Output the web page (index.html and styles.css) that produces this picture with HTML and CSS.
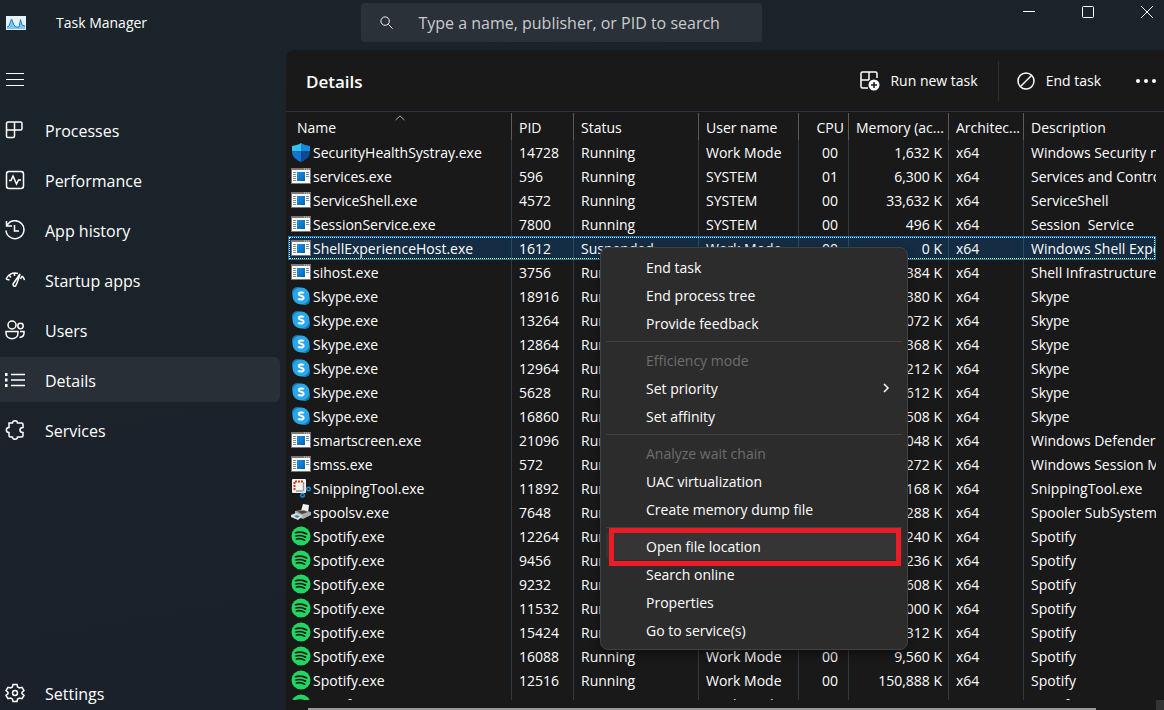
FILE: index.html
```
<!DOCTYPE html>
<html lang="en">
<head>
<meta charset="UTF-8">
<meta name="viewport" content="width=device-width, initial-scale=1.0">
<title>Task Manager</title>
<link rel="stylesheet" href="styles.css">
</head>
<body>
<!-- process icons, reused by the table rows -->
<svg class="sprite" aria-hidden="true">
  <defs>
    <linearGradient id="blue" x1="0" y1="0" x2="1" y2="1">
      <stop offset="0" stop-color="#1a92e6"/>
      <stop offset="1" stop-color="#0563b3"/>
    </linearGradient>
  </defs>
  <symbol id="shield" viewBox="0 0 20 20">
    <path d="M10 1C7 3 4 3.500 1 4V9.500H10Z" fill="#35c1f1"/>
    <path d="M10 1C13 3 16 3.500 19 4V9.500H10Z" fill="#1789dc"/>
    <path d="M1 9.500C1 14.500 5 18 10 20V9.500Z" fill="#1475d0"/>
    <path d="M19 9.500C19 14.500 15 18 10 20V9.500Z" fill="#0c4a94"/>
  </symbol>
  <symbol id="app" viewBox="0 0 20 20">
    <rect x="0" y="2" width="20" height="16" fill="#777"/>
    <rect x="1" y="4" width="18" height="13" fill="#fff"/>
    <path d="M13 3h1M15 3h1M17 3h1" stroke="#ddd"/>
    <path d="M2 6.500h3M2 8.500h3M2 10.500h3M2 12.500h3M2 14.500h3M15 6.500h3M15 8.500h3M15 10.500h3" stroke="#888"/>
    <rect x="6" y="6" width="8" height="9" fill="url(#blue)"/>
  </symbol>
  <symbol id="skype" viewBox="0 0 20 20">
    <circle cx="6.500" cy="6.500" r="5.500" fill="#1382c4"/>
    <circle cx="13.500" cy="13.500" r="5.500" fill="#1382c4"/>
    <circle cx="10" cy="10" r="8.500" fill="#28a8ea"/>
    <path d="M12.700 7.300C12 6.200 7.800 5.900 7.800 8.200C7.800 10.300 12.600 9.300 12.600 11.700C12.600 14.200 8 13.900 7.200 12.500" fill="none" stroke="#fff" stroke-width="2"/>
  </symbol>
  <symbol id="snip" viewBox="0 0 20 20">
    <rect x="1" y="1" width="14" height="14" rx="1" fill="#f3f3f3"/>
    <path d="M3.500 12V3.500H12" fill="none" stroke="#d83b01" stroke-width="2" stroke-dasharray="2 1"/>
    <path d="M12.500 4V13H5" fill="none" stroke="#999" stroke-width="1.500"/>
    <path d="M13 10.500H16M12 13V16" stroke="#ddd" stroke-width="1.500"/>
    <circle cx="17.500" cy="11" r="1.800" fill="none" stroke="#1b8fd8" stroke-width="1.400"/>
    <circle cx="11.500" cy="17.300" r="1.800" fill="none" stroke="#1b8fd8" stroke-width="1.400"/>
  </symbol>
  <symbol id="printer" viewBox="0 0 20 20">
    <path d="M10 9L12 2L18 3L17 11Z" fill="#f5f5f5"/>
    <path d="M4 9L12 8L20 10V13L12 17L4 14Z" fill="#a9a9a9"/>
    <path d="M6 9.500L13 8.500L17 10L11 12Z" fill="#444"/>
    <path d="M0 13L5 11L12 14L7 18L0 15Z" fill="#dcdcdc"/>
    <path d="M3 14L6 13L9 14.500L6 16Z" fill="#3d87c9"/>
  </symbol>
  <symbol id="spotify" viewBox="0 0 20 20">
    <circle cx="10" cy="10" r="9.500" fill="#1ed760"/>
    <path d="M4.500 6.800C8 5.700 12.500 6.100 15.700 8M5 10C8 9.100 11.800 9.500 14.600 11.200M5.400 13C8 12.300 11 12.700 13.600 14.200" fill="none" stroke="#191919" stroke-width="1.600" stroke-linecap="round"/>
  </symbol>
</svg>

<div class="window">
  <header class="titlebar">
    <div class="brand">
      <svg class="brand-icon" viewBox="0 0 20 14">
        <rect width="20" height="14" fill="#e8f1f8"/>
        <path d="M1 11L3 10L5.500 3L8 9L10 11H13L14.500 3.500L16 9L19 10V13H1Z" fill="#7cc7f2"/>
        <path d="M1 11L3 10L5.500 3L8 9L10 11H13L14.500 3.500L16 9L19 10" fill="none" stroke="#1681d2"/>
      </svg>
      <span>Task Manager</span>
    </div>
    <label class="search">
      <svg class="search-icon" viewBox="0 0 16 16"><circle cx="6.500" cy="6.500" r="4.500"/><path d="M10 10L14.500 14.500"/></svg>
      <input type="text" aria-label="Search" placeholder="Type a name, publisher, or PID to search">
    </label>
    <div class="window-buttons">
      <button type="button" aria-label="Minimize"><svg viewBox="0 0 14 14"><path d="M1 6.500H13"/></svg></button>
      <button type="button" aria-label="Maximize"><svg viewBox="0 0 14 14"><rect x="1.500" y="1.500" width="11" height="11" rx="1"/></svg></button>
      <button type="button" aria-label="Close"><svg viewBox="0 0 14 14"><path d="M1 1L13 13M13 1L1 13"/></svg></button>
    </div>
  </header>

  <nav class="sidebar">
    <button type="button" class="menu-toggle" aria-label="Open navigation">
      <svg class="icon" viewBox="0 0 20 20"><path d="M1 4.500H19M1 10.500H19M1 16.500H19"/></svg>
    </button>
    <a class="nav-item" href="#"><svg class="icon" viewBox="0 0 20 20"><path d="M3 2H15.500Q17 2 17 3.500V8.500Q17 10 15.500 10H1.500V3.500Q1.500 2 3 2ZM1.500 10V16Q1.500 17.500 3 17.500H8Q9.500 17.500 9.500 16V2"/></svg><span>Processes</span></a>
    <a class="nav-item" href="#"><svg class="icon" viewBox="0 0 20 20"><rect x="1.500" y="1.500" width="17" height="17" rx="2.500"/><path d="M4 10.500H6L8 6L11.500 14L13.500 10H16"/></svg><span>Performance</span></a>
    <a class="nav-item" href="#"><svg class="icon" viewBox="0 0 20 20"><path d="M1.500 1V6H7M2 5.500A9 9 0 1 1 1 10.500M9.500 5V11H14"/></svg><span>App history</span></a>
    <a class="nav-item" href="#"><svg class="icon" viewBox="0 0 20 20"><path d="M1 9C3 4 8 2 13 3.500M1 9L4.500 10M4 5L6 7.500M9.500 3V6M17 6Q19 8 19.500 10M17 6L15.500 9M15 4L8 14Q8 17 10.500 16Q12 14 15 4Z"/></svg><span>Startup apps</span></a>
    <a class="nav-item" href="#"><svg class="icon" viewBox="0 0 20 20"><circle cx="7" cy="5" r="4"/><circle cx="15.500" cy="6" r="2.700"/><path d="M1 11.500H13V13C13 20.500 1 20.500 1 13ZM15 11.500H19V13Q19 17 14.500 17.500"/></svg><span>Users</span></a>
    <a class="nav-item active" href="#"><svg class="icon" viewBox="0 0 20 20"><path d="M6 4.500H20M6 10H20M6 15.500H20"/><path class="dots" d="M0 4.500H2.500M0 10H2.500M0 15.500H2.500"/></svg><span>Details</span></a>
    <a class="nav-item" href="#"><svg class="icon" viewBox="0 0 20 20"><path d="M4 3H7.500C7.500 0 12.500 0 12.500 3H16.500Q18 3 18 4.500V7.500C14 7.500 14 12.500 18 12.500V15.500Q18 17 16.500 17H12.500C12.500 20 7.500 20 7.500 17H5.500Q4 17 4 15.500V12.500C.500 12.500 .500 7.500 4 7.500Z"/></svg><span>Services</span></a>
    <a class="nav-item settings" href="#"><svg class="icon" viewBox="0 0 20 20"><path d="M8 1.500H12L12.600 4L14.500 5L17 4.300L19 7.500L17 9.300V10.700L19 12.500L17 15.700L14.500 15L12.600 16L12 18.500H8L7.400 16L5.500 15L3 15.700L1 12.500L3 10.700V9.300L1 7.500L3 4.300L5.500 5L7.400 4Z"/><circle cx="10" cy="10" r="2.500"/></svg><span>Settings</span></a>
  </nav>

  <main class="content">
    <div class="toolbar">
      <h1>Details</h1>
      <button type="button" class="command">
        <svg class="icon" viewBox="0 0 20 20"><path d="M8 17H2.500Q1 17 1 15.500V2.500Q1 1 2.500 1H15.500Q17 1 17 2.500V7M1 9H9M9 1V9"/><circle class="plus-disc" cx="14" cy="14" r="5.500"/><path class="plus" d="M14 11V17M11 14H17"/></svg>
        <span>Run new task</span>
      </button>
      <button type="button" class="command divided">
        <svg class="icon" viewBox="0 0 20 20"><circle cx="10" cy="10" r="8"/><path d="M15.500 4.500L4.500 15.500"/></svg>
        <span>End task</span>
      </button>
      <button type="button" class="more" aria-label="More options">
        <svg viewBox="0 0 20 6"><circle cx="2" cy="3" r="2"/><circle cx="10" cy="3" r="2"/><circle cx="18" cy="3" r="2"/></svg>
      </button>
    </div>

    <div class="table-wrap">
      <table class="processes">
        <colgroup>
          <col class="col-name"><col class="col-pid"><col class="col-status"><col class="col-user"><col class="col-cpu"><col class="col-memory"><col class="col-arch"><col>
        </colgroup>
        <thead>
          <tr>
            <th class="sorted">Name<svg class="sort" viewBox="0 0 10 6"><path d="M.500 5L5 1L9.500 5"/></svg></th>
            <th>PID</th><th>Status</th><th>User name</th><th class="num">CPU</th><th>Memory (ac...</th><th>Architec...</th><th>Description</th>
          </tr>
        </thead>
        <tbody>
          <tr><td><svg><use href="#shield"/></svg>SecurityHealthSystray.exe</td><td>14728</td><td>Running</td><td>Work Mode</td><td>00</td><td>1,632 K</td><td>x64</td><td>Windows Security notification icon</td></tr>
          <tr><td><svg><use href="#app"/></svg>services.exe</td><td>596</td><td>Running</td><td>SYSTEM</td><td>01</td><td>6,300 K</td><td>x64</td><td>Services and Controller app</td></tr>
          <tr><td><svg><use href="#app"/></svg>ServiceShell.exe</td><td>4572</td><td>Running</td><td>SYSTEM</td><td>00</td><td>33,632 K</td><td>x64</td><td>ServiceShell</td></tr>
          <tr><td><svg><use href="#app"/></svg>SessionService.exe</td><td>7800</td><td>Running</td><td>SYSTEM</td><td>00</td><td>496 K</td><td>x64</td><td>Session&nbsp; Service</td></tr>
          <tr class="selected"><td><svg><use href="#app"/></svg>ShellExperienceHost.exe</td><td>1612</td><td>Suspended</td><td>Work Mode</td><td>00</td><td>0 K</td><td>x64</td><td>Windows Shell Experience Host</td></tr>
          <tr><td><svg><use href="#app"/></svg>sihost.exe</td><td>3756</td><td>Running</td><td>Work Mode</td><td>00</td><td>5,384 K</td><td>x64</td><td>Shell Infrastructure Host</td></tr>
          <tr><td><svg><use href="#skype"/></svg>Skype.exe</td><td>18916</td><td>Running</td><td>Work Mode</td><td>00</td><td>9,380 K</td><td>x64</td><td>Skype</td></tr>
          <tr><td><svg><use href="#skype"/></svg>Skype.exe</td><td>13264</td><td>Running</td><td>Work Mode</td><td>00</td><td>8,072 K</td><td>x64</td><td>Skype</td></tr>
          <tr><td><svg><use href="#skype"/></svg>Skype.exe</td><td>12864</td><td>Running</td><td>Work Mode</td><td>00</td><td>7,368 K</td><td>x64</td><td>Skype</td></tr>
          <tr><td><svg><use href="#skype"/></svg>Skype.exe</td><td>12964</td><td>Running</td><td>Work Mode</td><td>00</td><td>6,212 K</td><td>x64</td><td>Skype</td></tr>
          <tr><td><svg><use href="#skype"/></svg>Skype.exe</td><td>5628</td><td>Running</td><td>Work Mode</td><td>00</td><td>2,612 K</td><td>x64</td><td>Skype</td></tr>
          <tr><td><svg><use href="#skype"/></svg>Skype.exe</td><td>16860</td><td>Running</td><td>Work Mode</td><td>00</td><td>9,508 K</td><td>x64</td><td>Skype</td></tr>
          <tr><td><svg><use href="#app"/></svg>smartscreen.exe</td><td>21096</td><td>Running</td><td>Work Mode</td><td>00</td><td>7,048 K</td><td>x64</td><td>Windows Defender SmartScreen</td></tr>
          <tr><td><svg><use href="#app"/></svg>smss.exe</td><td>572</td><td>Running</td><td>SYSTEM</td><td>00</td><td>272 K</td><td>x64</td><td>Windows Session Manager</td></tr>
          <tr><td><svg><use href="#snip"/></svg>SnippingTool.exe</td><td>11892</td><td>Running</td><td>Work Mode</td><td>00</td><td>3,168 K</td><td>x64</td><td>SnippingTool.exe</td></tr>
          <tr><td><svg><use href="#printer"/></svg>spoolsv.exe</td><td>7648</td><td>Running</td><td>SYSTEM</td><td>00</td><td>5,288 K</td><td>x64</td><td>Spooler SubSystem App</td></tr>
          <tr><td><svg><use href="#spotify"/></svg>Spotify.exe</td><td>12264</td><td>Running</td><td>Work Mode</td><td>00</td><td>4,240 K</td><td>x64</td><td>Spotify</td></tr>
          <tr><td><svg><use href="#spotify"/></svg>Spotify.exe</td><td>9456</td><td>Running</td><td>Work Mode</td><td>00</td><td>7,236 K</td><td>x64</td><td>Spotify</td></tr>
          <tr><td><svg><use href="#spotify"/></svg>Spotify.exe</td><td>9232</td><td>Running</td><td>Work Mode</td><td>00</td><td>8,608 K</td><td>x64</td><td>Spotify</td></tr>
          <tr><td><svg><use href="#spotify"/></svg>Spotify.exe</td><td>11532</td><td>Running</td><td>Work Mode</td><td>00</td><td>6,000 K</td><td>x64</td><td>Spotify</td></tr>
          <tr><td><svg><use href="#spotify"/></svg>Spotify.exe</td><td>15424</td><td>Running</td><td>Work Mode</td><td>00</td><td>9,312 K</td><td>x64</td><td>Spotify</td></tr>
          <tr><td><svg><use href="#spotify"/></svg>Spotify.exe</td><td>16088</td><td>Running</td><td>Work Mode</td><td>00</td><td>9,560 K</td><td>x64</td><td>Spotify</td></tr>
          <tr><td><svg><use href="#spotify"/></svg>Spotify.exe</td><td>12516</td><td>Running</td><td>Work Mode</td><td>00</td><td>150,888 K</td><td>x64</td><td>Spotify</td></tr>
          <tr><td><svg><use href="#spotify"/></svg>Spotify.exe</td><td>12812</td><td>Running</td><td>Work Mode</td><td>01</td><td>187,836 K</td><td>x64</td><td>Spotify</td></tr>
        </tbody>
      </table>
    </div>
    <div class="scrollbar"><div class="thumb"></div><div class="corner"></div></div>

    <div class="context-menu" role="menu">
      <button type="button" role="menuitem">End task</button>
      <button type="button" role="menuitem">End process tree</button>
      <button type="button" role="menuitem">Provide feedback</button>
      <hr>
      <button type="button" role="menuitem" disabled>Efficiency mode</button>
      <button type="button" role="menuitem">Set priority<svg class="chevron" viewBox="0 0 8 12"><path d="M2 2L6 6L2 10"/></svg></button>
      <button type="button" role="menuitem">Set affinity</button>
      <hr>
      <button type="button" role="menuitem" disabled>Analyze wait chain</button>
      <button type="button" role="menuitem">UAC virtualization</button>
      <button type="button" role="menuitem">Create memory dump file</button>
      <hr>
      <button type="button" role="menuitem" class="highlighted">Open file location</button>
      <button type="button" role="menuitem">Search online</button>
      <button type="button" role="menuitem">Properties</button>
      <button type="button" role="menuitem">Go to service(s)</button>
    </div>
  </main>
</div>
</body>
</html>
```
FILE: styles.css
```
* {
  box-sizing: border-box;
}

body {
  margin: 0;
  font-family: "Open Sans", "Noto Sans", sans-serif;
  font-size: 14px;
  color: #fff;
  background: #1b2129;
}

button,
input {
  font: inherit;
  color: inherit;
  background: none;
  border: none;
  padding: 0;
}

svg {
  fill: none;
  stroke: currentColor;
  flex: none;
}

symbol {
  stroke: none;
}

.sprite {
  position: absolute;
  width: 0;
  height: 0;
}

.window {
  display: grid;
  grid-template-columns: 286px minmax(0, 1fr);
  grid-template-rows: 50px minmax(0, 1fr);
  height: 100vh;
  overflow: hidden;
  background: linear-gradient(170deg, #1b242a, #1b202b);
}

/* title bar */
.titlebar {
  grid-column: 1 / 3;
  display: grid;
  grid-template-columns: 9fr 401px 10fr;
  align-items: start;
}

.brand {
  display: flex;
  align-items: center;
  gap: 30px;
  height: 45px;
  padding-left: 6px;
}

.brand-icon {
  width: 20px;
  height: 14px;
  stroke: none;
}

.search {
  display: flex;
  align-items: center;
  gap: 24px;
  height: 39px;
  margin-top: 3px;
  padding-left: 18px;
  background: #2a3138;
  border-radius: 4px;
}

.search-icon {
  width: 15px;
  height: 15px;
}

.search input {
  flex: 1;
  min-width: 0;
  font-size: 16px;
}

.search input::placeholder {
  color: #c9ccce;
  opacity: 1;
}

.window-buttons {
  display: flex;
  justify-content: flex-end;
  gap: 45px;
  padding: 5px 10px 0 0;
}

.window-buttons button {
  width: 14px;
  height: 14px;
}

.window-buttons svg {
  display: block;
}

/* sidebar */
.sidebar {
  display: flex;
  flex-direction: column;
  gap: 5px;
  padding-right: 6px;
}

.icon {
  width: 20px;
  height: 20px;
  stroke-width: 1.5;
}

.menu-toggle {
  height: 52px;
  padding: 10px 5px 0;
  text-align: left;
}

.menu-toggle .icon {
  stroke-width: 1;
}

.nav-item {
  display: flex;
  align-items: center;
  gap: 20px;
  height: 45px;
  padding-left: 5px;
  font-size: 16px;
  color: #fff;
  text-decoration: none;
  border-radius: 0 6px 6px 0;
}

.nav-item span {
  padding-top: 2px;
}

.nav-item.active {
  background: #292f37;
}

.dots {
  stroke-width: 3;
}

.settings {
  margin-top: auto;
  margin-bottom: -5px;
}

/* details page */
.content {
  position: relative;
  display: flex;
  flex-direction: column;
  background: #191919;
  border-top-left-radius: 8px;
}

.toolbar {
  display: flex;
  align-items: center;
  height: 62px;
  padding: 0 8px 0 20px;
  border-bottom: 1px solid #30343a;
}

.toolbar h1 {
  flex: 1;
  margin: 0;
  padding-top: 2px;
  font-size: 17px;
  font-weight: 600;
}

.command {
  display: flex;
  align-items: center;
  gap: 10px;
  height: 40px;
  padding-right: 20px;
}

.command.divided {
  padding: 0 35px 0 17px;
  border-left: 1px solid #303030;
}

.plus-disc {
  fill: #fff;
  stroke: none;
}

.plus {
  stroke: #191919;
}

.more {
  width: 20px;
}

.more svg {
  display: block;
  fill: #fff;
  stroke: none;
}

.table-wrap {
  flex: 1;
  min-height: 0;
  overflow: hidden;
  margin: 1px 8px 0 2px;
}

.processes {
  width: 100%;
  table-layout: fixed;
  border-collapse: separate;
  border-spacing: 0;
  line-height: 20px;
}

.col-name { width: 224px; }
.col-pid { width: 62px; }
.col-status { width: 125px; }
.col-user { width: 100px; }
.col-cpu { width: 50px; }
.col-memory { width: 100px; }
.col-arch { width: 75px; }

.processes th,
.processes td {
  padding: 2px 6px 0 7px;
  white-space: nowrap;
  overflow: hidden;
  border-right: 1px solid #343a44;
}

.processes th {
  position: relative;
  height: 27px;
  padding-right: 0;
  font-weight: 400;
  text-align: left;
  border-color: #5a5a5a;
}

.processes th:first-child {
  padding-left: 9px;
}

.processes td {
  height: 24px;
}

.processes td:first-child {
  padding-left: 3px;
}

.processes th:last-child,
.processes td:last-child {
  padding-right: 0;
  border-right: none;
}

.processes td svg {
  width: 20px;
  height: 20px;
  margin: -1px 2px 1px 0;
  vertical-align: top;
  stroke: none;
}

.processes .num,
.processes td:nth-child(6) {
  text-align: right;
}

.processes .num {
  padding-right: 4px;
}

.processes td:nth-child(5) {
  padding-right: 10px;
  text-align: right;
}

.sort {
  position: absolute;
  top: 2px;
  left: 107px;
  width: 10px;
  height: 6px;
  stroke: #aaa;
}

.selected {
  position: relative;
  background: #142d44;
  outline: 1px solid #0078d7;
  outline-offset: -1px;
}

/* focus rectangle, spans the whole row */
.selected td:first-child::after {
  content: "";
  position: absolute;
  inset: 1px;
  border: 1px dotted #fff;
}

.selected td {
  border-color: #2b4a66;
}

.scrollbar {
  display: flex;
  align-items: flex-end;
  justify-content: space-between;
  height: 10px;
  padding-left: 22px;
}

.thumb {
  width: 92%;
  height: 2px;
  background: #9a9a9a;
}

.corner {
  width: 8px;
  height: 10px;
  background: #333;
}

/* context menu */
.context-menu {
  position: absolute;
  top: 197px;
  left: 314px;
  display: flex;
  flex-direction: column;
  width: 308px;
  padding: 5px;
  background: #2c2c2c;
  border: 1px solid #414141;
  border-radius: 8px;
  box-shadow: 0 4px 10px rgba(0, 0, 0, 0.4);
}

.context-menu button {
  position: relative;
  display: flex;
  align-items: center;
  justify-content: space-between;
  height: 28px;
  padding: 0 12px 0 40px;
  border-radius: 4px;
}

.context-menu button:disabled {
  color: #6d6d6d;
}

.context-menu hr {
  width: 100%;
  height: 1px;
  margin: 4px 0;
  border: none;
  background: #414141;
}

.context-menu .highlighted {
  background: #353535;
}

.highlighted::after {
  content: "";
  position: absolute;
  inset: -4px 1px -6px 3px;
  border: 5px solid #ed1c24;
}

.chevron {
  width: 8px;
  height: 12px;
  stroke-width: 1.5;
}
```
